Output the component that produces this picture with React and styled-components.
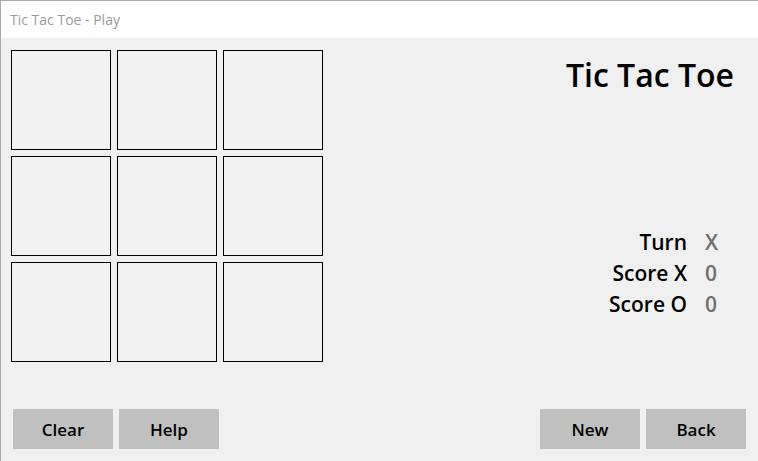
import React, { useState } from "react";
import styled, { createGlobalStyle } from "styled-components";

const Global = createGlobalStyle`
	html, body {
		margin: 0;
		padding: 0;
		background: #f0f0f0;
	}
	* {
		box-sizing: border-box;
	}
`;

const Window = styled.div`
	width: 758px;
	height: 461px;
	border-top: 1px solid #a9a9a9;
	border-left: 1px solid #a9a9a9;
	display: flex;
	flex-direction: column;
	font-family: "Open Sans", "Noto Sans", sans-serif;
	background: #f0f0f0;
	overflow: hidden;
`;

const TitleBar = styled.div`
	height: 37px;
	flex: none;
	background: #ffffff;
	color: #9a9a9a;
	font-size: 14px;
	line-height: 37px;
	padding-left: 9px;
	padding-bottom: 2px;
`;

const Content = styled.div`
	flex: 1;
	display: flex;
	flex-direction: column;
`;

const Top = styled.div`
	flex: 1;
	display: flex;
	padding: 12px 0 0 10px;
`;

const Board = styled.div`
	display: grid;
	grid-template-columns: repeat(3, 100px);
	grid-auto-rows: 100px;
	gap: 6px;
	align-self: flex-start;
`;

const Cell = styled.button`
	border: 1px solid #000;
	background: #f2f2f2;
	padding: 0;
	font-family: inherit;
	font-size: 48px;
	font-weight: 600;
	cursor: pointer;
`;

const Side = styled.div`
	flex: 1;
	display: flex;
	flex-direction: column;
	align-items: flex-end;
	padding-right: 24px;
`;

const Heading = styled.div`
	font-size: 32px;
	font-weight: 600;
	color: #000;
	line-height: 40px;
	margin-top: 5px;
`;

const Stats = styled.div`
	display: grid;
	grid-template-columns: auto 29px;
	column-gap: 18px;
	grid-auto-rows: 31px;
	align-items: center;
	margin-top: 131px;
`;

const Label = styled.div`
	text-align: right;
	font-size: 21px;
	font-weight: 600;
	color: #000;
`;

const Value = styled.div`
	font-size: 21px;
	font-weight: 600;
	color: #6f6f6f;
`;

const Bottom = styled.div`
	display: flex;
	justify-content: space-between;
	padding: 0 12px 12px 12px;
`;

const Group = styled.div`
	display: flex;
	gap: 6px;
`;

const Button = styled.button`
	width: 100px;
	height: 40px;
	border: none;
	background: #c0c0c0;
	font-family: inherit;
	font-size: 17px;
	font-weight: 600;
	color: #000;
	padding: 0;
	cursor: pointer;
`;

export default function App(){
	const [cells, setCells] = useState(Array(9).fill(""));
	const [turn, setTurn] = useState("X");
	const [score] = useState({ X: 0, O: 0 });

	function play(i){
		if (cells[i]) return;
		const next = [...cells];
		next[i] = turn;
		setCells(next);
		setTurn(turn === "X" ? "O" : "X");
	}

	function clear(){
		setCells(Array(9).fill(""));
		setTurn("X");
	}

	return (
		<>
			<Global />
			<Window>
				<TitleBar>Tic Tac Toe - Play</TitleBar>
				<Content>
					<Top>
						<Board>
							{cells.map((c, i) => (
								<Cell key={i} onClick={() => play(i)}>{c}</Cell>
							))}
						</Board>
						<Side>
							<Heading>Tic Tac Toe</Heading>
							<Stats>
								<Label>Turn</Label>
								<Value>{turn}</Value>
								<Label>Score X</Label>
								<Value>{score.X}</Value>
								<Label>Score O</Label>
								<Value>{score.O}</Value>
							</Stats>
						</Side>
					</Top>
					<Bottom>
						<Group>
							<Button onClick={clear}>Clear</Button>
							<Button>Help</Button>
						</Group>
						<Group>
							<Button onClick={clear}>New</Button>
							<Button>Back</Button>
						</Group>
					</Bottom>
				</Content>
			</Window>
		</>
	);
}
